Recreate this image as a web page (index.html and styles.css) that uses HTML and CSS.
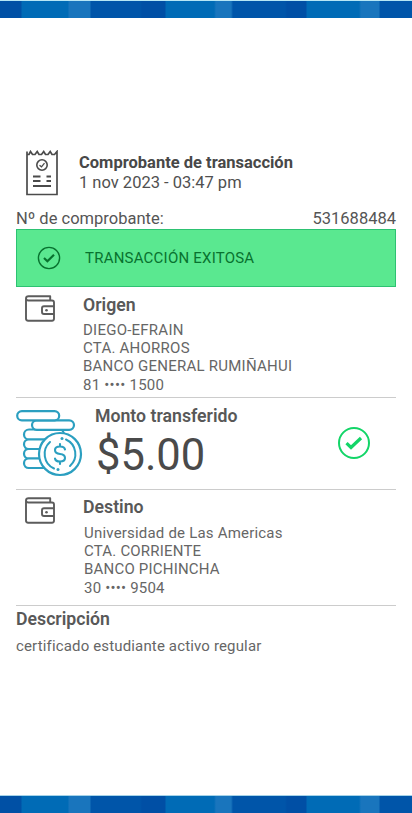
FILE: index.html
```
<!DOCTYPE html>
<html lang="es">
<head>
<meta charset="utf-8">
<title>Comprobante de transacción</title>
<link rel="stylesheet" href="styles.css">
</head>
<body>
<div class="page">
  <div class="band"></div>
  <main class="receipt">
    <header class="head">
      <svg class="head-icon" width="34" height="46" viewBox="0 0 34 46" fill="none" stroke="#4b4b4b" stroke-width="2">
        <path d="M2 1.500V44.500H32V1.500L29.500 4.500H27L25.200 1.500L23 4.500H20.500L18.700 1.500L16.500 4.500H14L12.200 1.500L10 4.500H7.500L5.500 1.500L4 4.500H2" stroke-width="1.700"/>
        <circle cx="17" cy="15" r="5.200" stroke-width="1.600"/>
        <path d="M14.500 15.200l2 1.600 3-3.600" stroke-width="1.300"/>
        <path d="M8 26.500h7.500M21.500 26.500h4.500M8 31h7.500M21.500 31h4.500M8 36h18" stroke-width="1.800"/>
      </svg>
      <div class="head-text">
        <h1 class="head-title">Comprobante de transacción</h1>
        <p class="head-date">1 nov 2023 - 03:47 pm</p>
      </div>
    </header>
    <div class="voucher"><span>Nº de comprobante:</span><span class="voucher-number">531688484</span></div>
    <div class="status">
      <svg width="24" height="24" viewBox="0 0 24 24" fill="none" stroke="#08722f">
        <circle cx="12" cy="12" r="10.600" stroke-width="1.400"/>
        <path d="M7 12l3.400 3.200L17 8.800" stroke-width="2.200"/>
      </svg>
      <span class="status-text">TRANSACCIÓN EXITOSA</span>
    </div>
    <section class="account">
      <svg class="wallet" width="30" height="27" viewBox="0 0 30 27" fill="none" stroke="#5c5c5c" stroke-width="1.900" stroke-linejoin="round">
        <path d="M25.200 5.500V1.200H3.500Q1 1.200 1 3.500V23.500Q1 25.700 3.200 25.700H27Q29 25.700 29 23.500V7.500Q29 5.500 27 5.500H3.500Q1 5.500 1 3.500M29 11.300H19Q17 11.300 17 13.300V17Q17 19 19 19H29"/>
        <circle cx="21.500" cy="15.200" r="1.300" fill="#5c5c5c" stroke="none"/>
      </svg>
      <div class="account-text">
        <h2 class="heading">Origen</h2>
        <p class="details"><span>DIEGO-EFRAIN</span><span>CTA. AHORROS</span><span>BANCO GENERAL RUMIÑAHUI</span><span class="number">81 •••• 1500</span></p>
      </div>
    </section>
    <section class="amount">
      <svg class="coins" width="68" height="68" viewBox="0 0 68 68" fill="#fff" stroke="#2b9fc0" stroke-width="2.200" stroke-linecap="round">
        <rect x="8" y="19.500" width="40" height="10" rx="5"/>
        <rect x="8" y="29.500" width="40" height="9.500" rx="4.750"/>
        <rect x="8" y="39" width="40" height="9.500" rx="4.750"/>
        <rect x="8" y="48.500" width="40" height="9.500" rx="4.750"/>
        <rect x="16" y="10.300" width="42" height="9.500" rx="4.750"/>
        <rect x="1.200" y="1.200" width="42" height="9.200" rx="4.600"/>
        <circle cx="44" cy="44" r="21"/>
        <g fill="none">
          <path d="M38 58.500A16 16 0 0 1 34 32M50 29.500A16 16 0 0 1 54 56" stroke-width="2"/>
          <path d="M49 39.500Q48.500 36.500 44 36.500Q39 36.500 39 40T44 44Q49 44.500 49 48T44 51.500Q39.500 51.500 39 48.500M44 34V36.500M44 51.500V54" stroke-width="2.100"/>
        </g>
        <circle cx="46" cy="28.500" r="1.500" fill="#2b9fc0" stroke="none"/>
        <circle cx="42" cy="59.500" r="1.500" fill="#2b9fc0" stroke="none"/>
      </svg>
      <div class="amount-text">
        <h2 class="heading">Monto transferido</h2>
        <p class="amount-value">$5.00</p>
      </div>
      <svg class="done" width="34" height="34" viewBox="0 0 34 34" fill="none" stroke="#13d568">
        <circle cx="17" cy="17" r="15" stroke-width="2"/>
        <path d="M9.500 17.200l4.500 4.300L24 12" stroke-width="3.200"/>
      </svg>
    </section>
    <section class="account destination">
      <svg class="wallet" width="30" height="27" viewBox="0 0 30 27" fill="none" stroke="#5c5c5c" stroke-width="1.900" stroke-linejoin="round">
        <path d="M25.200 5.500V1.200H3.500Q1 1.200 1 3.500V23.500Q1 25.700 3.200 25.700H27Q29 25.700 29 23.500V7.500Q29 5.500 27 5.500H3.500Q1 5.500 1 3.500M29 11.300H19Q17 11.300 17 13.300V17Q17 19 19 19H29"/>
        <circle cx="21.500" cy="15.200" r="1.300" fill="#5c5c5c" stroke="none"/>
      </svg>
      <div class="account-text">
        <h2 class="heading">Destino</h2>
        <p class="details"><span>Universidad de Las Americas</span><span>CTA. CORRIENTE</span><span>BANCO PICHINCHA</span><span class="number">30 •••• 9504</span></p>
      </div>
    </section>
    <section class="description">
      <h2 class="heading">Descripción</h2>
      <p class="description-text">certificado estudiante activo regular</p>
    </section>
  </main>
  <div class="band band-bottom"></div>
</div>
</body>
</html>
```
FILE: styles.css
```
* { box-sizing: border-box; }
body, h1, h2, p { margin: 0; }
body { background: #fff; color: #555; font-family: Roboto, "Liberation Sans", sans-serif; }
svg { display: block; flex: none; }
.page { display: flex; flex-direction: column; height: 813px; overflow: hidden; }
.band {
  flex: none;
  height: 18px;
  border-top: 1px solid #b5e6f5;
  background: linear-gradient(90deg, #0050a5 21px, #006bb6 22px 68px, #1975bd 69px 90px, #0055a9 91px 140px, #004fa5 142px 165px, #006bb6 166px 214px, #1975bd 216px 231px, #0055a9 233px 285px, #004fa5 287px 306px, #006bb6 307px 359px, #1975bd 361px 379px, #0055a9 380px);
}
.band-bottom { border-color: #a5d3e8; }
.receipt { flex: 1; padding: 132px 16px 0; }
.head { display: flex; height: 58px; }
.head-icon { margin: 0 20px 0 9px; }
.head-text { padding-top: 3px; line-height: 20px; font-size: 16.500px; color: #505050; }
.head-title { font-size: 16.500px; line-height: 20px; font-weight: 700; color: #484848; }
.voucher { display: flex; justify-content: space-between; height: 21px; line-height: 22px; font-size: 16.500px; }
.status { display: flex; align-items: center; height: 58px; padding-left: 20px; border: 1px solid #2dc272; background: #5ae890; color: #08722f; font-size: 15px; letter-spacing: .22px; }
.status-text { margin-left: 24px; }
.account { display: flex; height: 111px; padding-left: 9px; border-bottom: 1px solid #ccc; }
.wallet { margin-top: 8px; }
.account-text { padding: 8px 0 0 28px; }
.heading { font-size: 17.700px; line-height: 20px; font-weight: 600; color: #585858; }
.details { padding-top: 6px; font-size: 15px; line-height: 18px; letter-spacing: .24px; color: #666; }
.details span { display: block; }
.details .number { margin-top: 1px; }
.amount { display: flex; height: 92px; border-bottom: 1px solid #ccc; }
.coins { margin-top: 12px; }
.amount-text { flex: 1; padding: 8px 0 0 11px; }
.amount-value { padding-left: 1px; font-size: 43.500px; line-height: 59px; color: #4a4a4a; }
.done { margin: 28px 25px 0 0; }
.destination { height: 116px; }
.destination .wallet { margin-top: 7px; }
.destination .account-text { padding-top: 7px; }
.destination .details { padding: 7px 0 0 1px; letter-spacing: .2px; }
.description { padding-top: 3px; }
.description-text { margin-top: 8px; font-size: 15px; line-height: 18px; letter-spacing: .15px; color: #666; }
```
